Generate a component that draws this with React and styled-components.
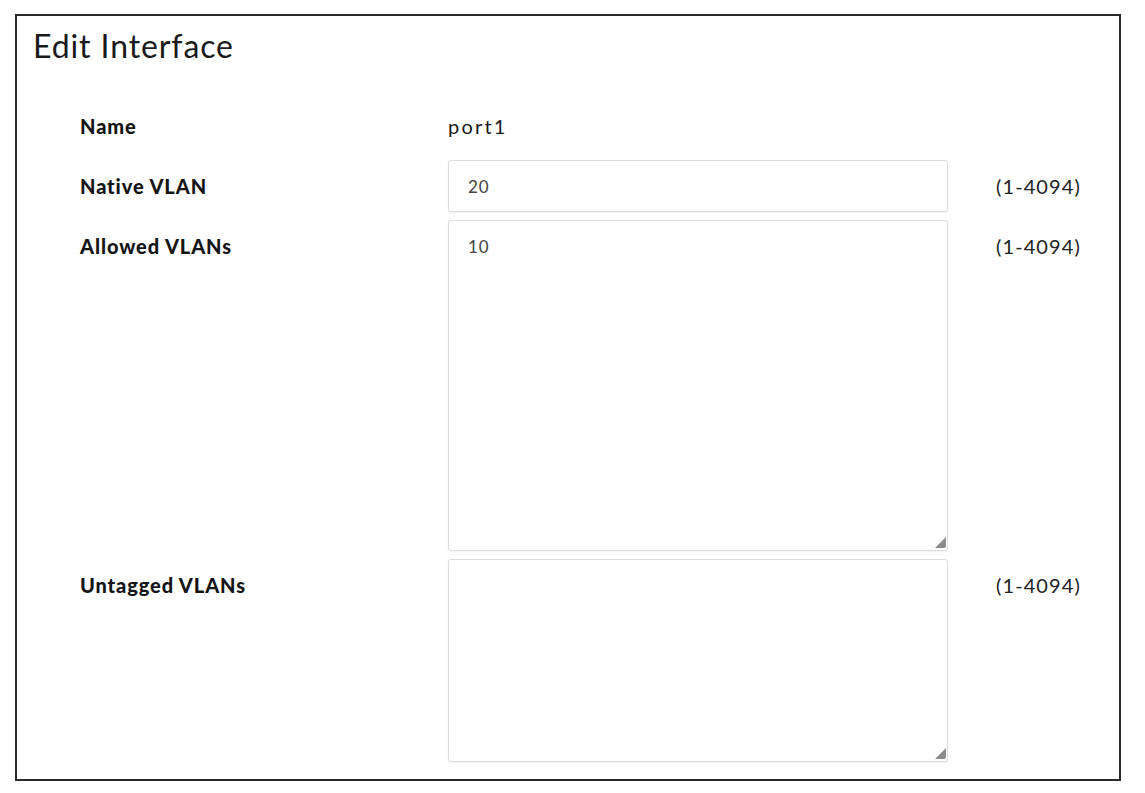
import React from "react";
import styled, { createGlobalStyle } from "styled-components";

const GlobalStyle = createGlobalStyle`
  html, body {
    margin: 0;
    padding: 0;
    background: #fff;
  }
  body {
    font-family: Lato, "Open Sans", "Liberation Sans", sans-serif;
    color: #1c1c1c;
  }
`;

const Page = styled.div`
  width: 1145px;
  height: 793px;
  padding: 14px 24px 12px 15px;
  box-sizing: border-box;
`;

const Frame = styled.section`
  height: 100%;
  border: 2px solid #2a2a2a;
  box-sizing: border-box;
  padding: 11px 0 0 16px;
`;

const Title = styled.h1`
  margin: 0;
  font-size: 32px;
  line-height: 38px;
  font-weight: 400;
  letter-spacing: 0.9px;
  color: #1a1a1a;
`;

const Form = styled.div`
  display: grid;
  grid-template-columns: 320px 500px auto;
  column-gap: 48px;
  row-gap: 8px;
  margin: 35px 0 0 47px;
`;

const Label = styled.div`
  font-size: 20px;
  font-weight: 900;
  line-height: 52px;
  letter-spacing: 0.9px;
  color: #151515;
`;

const Value = styled.div`
  font-size: 20px;
  line-height: 52px;
  letter-spacing: 2.2px;
  color: #1a1a1a;
`;

const Hint = styled.div`
  font-size: 20px;
  line-height: 52px;
  letter-spacing: 1.1px;
  color: #222;
`;

const TextInput = styled.input`
  width: 100%;
  height: 52px;
  box-sizing: border-box;
  border: 1px solid #dcdcdc;
  border-radius: 3px;
  box-shadow: 0 1px 2px rgba(0, 0, 0, 0.06);
  padding: 0 19px;
  font-family: inherit;
  font-size: 17px;
  letter-spacing: 1px;
  color: #444;
  background: #fff;
  outline: none;
`;

const AreaWrap = styled.div`
  position: relative;
  height: ${(p) => p.$height}px;

  &::after {
    content: "";
    position: absolute;
    right: 2px;
    bottom: 3px;
    width: 0;
    height: 0;
    border-left: 11px solid transparent;
    border-bottom: 11px solid #8a8a8a;
    border-bottom-right-radius: 2px;
  }
`;

const TextArea = styled.textarea`
  width: 100%;
  height: 100%;
  box-sizing: border-box;
  border: 1px solid #dcdcdc;
  border-radius: 3px;
  box-shadow: 0 1px 2px rgba(0, 0, 0, 0.06);
  padding: 15px 19px;
  font-family: inherit;
  font-size: 17px;
  letter-spacing: 1px;
  line-height: 22px;
  color: #444;
  background: #fff;
  resize: none;
  outline: none;
  display: block;
`;

const rows = [
  { label: "Allowed VLANs", value: "10", height: 331 },
  { label: "Untagged VLANs", value: "", height: 203 },
];

export default function App() {
  return (
    <Page>
      <GlobalStyle />
      <Frame>
        <Title>Edit Interface</Title>
        <Form>
          <Label>Name</Label>
          <Value>port1</Value>
          <div />

          <Label>Native VLAN</Label>
          <TextInput defaultValue="20" />
          <Hint>(1-4094)</Hint>

          {rows.map((r) => (
            <React.Fragment key={r.label}>
              <Label>{r.label}</Label>
              <AreaWrap $height={r.height}>
                <TextArea defaultValue={r.value} />
              </AreaWrap>
              <Hint>(1-4094)</Hint>
            </React.Fragment>
          ))}
        </Form>
      </Frame>
    </Page>
  );
}
